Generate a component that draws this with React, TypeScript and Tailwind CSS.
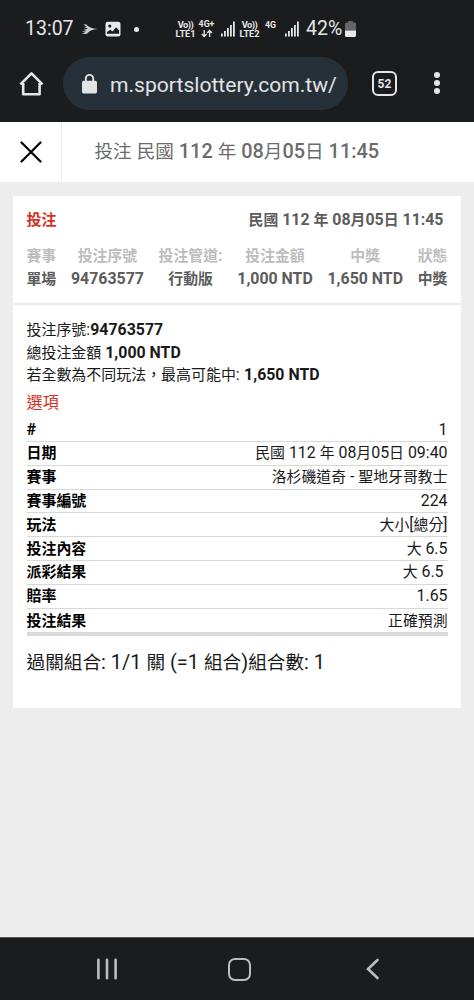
import clsx from "clsx"

const HAN = /([\u3000-\u9fff\uff00-\uffef]+)/

type TextProps = {
  children: string
  className?: string
}

// Han glyphs run slightly smaller than the Latin ones beside them
function Txt({ children, className }: TextProps) {
  return (
    <span className={clsx("whitespace-pre", className)}>
      {children.split(HAN).map((part, i) =>
        HAN.test(part) ? (
          <span key={i} className="text-[0.935em] leading-[0] tracking-normal">
            {part}
          </span>
        ) : (
          part
        ),
      )}
    </span>
  )
}

const summary = [
  { label: "賽事", value: "單場" },
  { label: "投注序號", value: "94763577" },
  { label: "投注管道:", value: "行動版" },
  { label: "投注金額", value: "1,000 NTD" },
  { label: "中獎", value: "1,650 NTD" },
  { label: "狀態", value: "中獎" },
]

const details = [
  { label: "#", value: "1" },
  { label: "日期", value: "民國 112 年 08月05日 09:40" },
  { label: "賽事", value: "洛杉磯道奇 - 聖地牙哥教士" },
  { label: "賽事編號", value: "224" },
  { label: "玩法", value: "大小[總分]" },
  { label: "投注內容", value: "大 6.5" },
  { label: "派彩結果", value: "大 6.5 " },
  { label: "賠率", value: "1.65" },
  { label: "投注結果", value: "正確預測" },
]

function Signal() {
  return (
    <svg className="shrink-0" width="14" height="16" viewBox="0 0 14 16" fill="#e6e6e6">
      <rect x="0" y="12.5" width="1.8" height="3" />
      <rect x="3" y="10" width="1.8" height="5.5" />
      <rect x="6" y="7" width="1.8" height="8.5" />
      <rect x="9" y="4" width="1.8" height="11.5" />
      <rect x="12" y="0.5" width="1.8" height="15" />
    </svg>
  )
}

function Volte({ line }: { line: string }) {
  return (
    <div className="flex w-[21px] flex-col items-center text-[9.3px] font-bold leading-[9px] text-[#e6e6e6]">
      <span className="tracking-[-0.5px]">Vo))</span>
      <span className="tracking-[-0.1px]">{line}</span>
    </div>
  )
}

function StatusBar() {
  return (
    <div className="flex h-[57px] items-center pl-[25px] pt-px text-[#e6e6e6]">
      <span className="w-[49px] text-[19.5px] leading-5">13:07</span>
      <svg className="ml-[7px]" width="17" height="12" viewBox="0 0 17 12">
        <path d="M2.500 1.500L5 1.200Q8 5.200 16.500 6Q8.500 6.800 6 10.800L1 11L5 8.600L0.500 8.700L5.500 7L2 6.900L7 5.700L2.500 3.800L6 4Z" fill="#d0d0d0" />
      </svg>
      <svg className="ml-[7px]" width="16" height="16" viewBox="0 0 16 16">
        <rect x="0.5" y="0.7" width="15" height="14.8" rx="2.3" fill="#e8e8e8" />
        <circle cx="4.8" cy="5" r="1.6" fill="#1b1c1e" />
        <path d="M2 12.8V11l3.2-2.200 2.300 1.600 3.600-4.200 3 3.200v3.400z" fill="#1b1c1e" />
      </svg>
      <span className="ml-[13px] size-[5px] rounded-full bg-[#e6e6e6]" />
      <div className="ml-[36px]">
        <Volte line="LTE1" />
      </div>
      <div className="ml-[2px] flex w-[17px] flex-col items-center text-[8.8px] font-bold leading-[9px]">
        <span>4G+</span>
        <svg width="12" height="9" viewBox="0 0 12 9" fill="none" stroke="#e6e6e6" strokeWidth="1.3">
          <path d="M3.2 1v6.5M.8 5l2.4 2.5L5.6 5M8.6 8V1.5M6.2 4l2.4-2.5L11 4" />
        </svg>
      </div>
      <div className="ml-[6px]">
        <Signal />
      </div>
      <div className="ml-[4px]">
        <Volte line="LTE2" />
      </div>
      <span className="ml-[5px] mb-[8px] w-[14px] text-[8.8px] font-bold leading-[9px]">4G</span>
      <div className="ml-[6px]">
        <Signal />
      </div>
      <span className="ml-[7px] w-[37px] text-[19.5px] leading-5">42%</span>
      <svg className="ml-[2px]" width="11" height="16" viewBox="0 0 11 16">
        <path d="M3.2 0h4.6v1.4H9.5A1.5 1.5 0 0 1 11 2.9V9.5H0V2.9A1.5 1.5 0 0 1 1.5 1.4h1.7z" fill="#666" />
        <path d="M0 9.5h11v4.9a1.5 1.5 0 0 1-1.5 1.5h-8A1.5 1.5 0 0 1 0 14.4z" fill="#e8e8e8" />
      </svg>
    </div>
  )
}

function AddressBar() {
  return (
    <div className="flex h-[65px] items-start text-[#e2e3e4]">
      <svg className="ml-[19px] mt-[14px]" width="25" height="26" viewBox="0 0 25 26" fill="none" stroke="#e6e6e6" strokeWidth="2.6">
        <path d="M4.2 12v11.2h16.4V12M1.4 13.4L12.5 2.4l11 11" strokeLinejoin="round" />
      </svg>
      <div className="ml-[19px] flex h-[53px] w-[285px] items-center rounded-full bg-[#263038] pl-[19px]">
        <svg width="15" height="20" viewBox="0 0 15 20">
          <rect x="0" y="6.8" width="15" height="12.6" rx="1.6" fill="#e2e3e4" />
          <path d="M3.8 8V4.6a3.7 3.7 0 0 1 7.4 0V8" fill="none" stroke="#e2e3e4" strokeWidth="1.9" />
        </svg>
        <span className="ml-[13px] mt-[2px] text-[21.1px] leading-6">m.sportslottery.com.tw/</span>
      </div>
      <div className="ml-[24px] mt-[14px] flex size-[25px] items-center justify-center rounded-[6px] border-[2.5px] border-[#e6e6e6] text-[12px] font-bold leading-none">
        52
      </div>
      <div className="ml-[37px] mt-[15px] flex flex-col gap-[2.5px]">
        <span className="size-[5.5px] rounded-full bg-[#e6e6e6]" />
        <span className="size-[5.5px] rounded-full bg-[#e6e6e6]" />
        <span className="size-[5.5px] rounded-full bg-[#e6e6e6]" />
      </div>
    </div>
  )
}

function TitleBar() {
  return (
    <div className="flex h-[60px] bg-white">
      <div className="flex w-[62px] items-center border-r border-[#ececec] pl-[20px]">
        <svg width="22" height="22" viewBox="0 0 22 22" stroke="#000" strokeWidth="2.2" strokeLinecap="round">
          <path d="M1.5 1.5l19 19M20.5 1.5l-19 19" />
        </svg>
      </div>
      <div className="flex items-center pl-[32.5px] text-[19.9px] leading-6 text-[#6b6b6b]">
        <Txt>投注 民國 </Txt>
        <Txt className="font-medium">112</Txt>
        <Txt> 年 </Txt>
        <Txt className="font-medium">08</Txt>
        <Txt>月</Txt>
        <Txt className="font-medium">05</Txt>
        <Txt>日 </Txt>
        <Txt className="font-medium">11:45</Txt>
      </div>
    </div>
  )
}

function Ticket() {
  return (
    <div className="mx-[13px] mt-[14px] h-[512px] bg-white">
      <div className="h-[109px] border-b-2 border-[#ebebeb] px-[13.5px] pt-[12px] font-bold">
        <div className="flex h-[24px] items-center justify-between pr-[4px] leading-6">
          <Txt className="text-[16px] text-[#d9301f]">投注</Txt>
          <Txt className="text-[15.9px] text-[#5c5c5c]">民國 112 年 08月05日 11:45</Txt>
        </div>
        <div className="mt-[12px] flex justify-between">
          {summary.map((s) => (
            <div key={s.label} className="flex flex-col items-center text-[15.9px] leading-[23px]">
              <Txt className="text-[#bdbdbd]">{s.label}</Txt>
              <Txt className="text-[#5c5c5c]">{s.value}</Txt>
            </div>
          ))}
        </div>
      </div>

      <div className="px-[13.5px] pt-[14px] text-[16px] text-[#1a1a1a]">
        <div className="flex flex-col leading-[22.6px]">
          <div>
            <Txt>投注序號:</Txt>
            <Txt className="text-[15.9px] font-bold">94763577</Txt>
          </div>
          <div>
            <Txt>總投注金額 </Txt>
            <Txt className="text-[15.9px] font-bold">1,000 NTD</Txt>
          </div>
          <div>
            <Txt className="tracking-[0.2px]">若全數為不同玩法，最高可能中: </Txt>
            <Txt className="text-[15.9px] font-bold">1,650 NTD</Txt>
          </div>
        </div>
        <div className="mt-[1px] h-[30.5px] text-[17.3px] leading-7 text-[#d9301f]">
          <Txt>選項</Txt>
        </div>
        <div className="border-b-4 border-[#dadada]">
          {details.map((d) => (
            <div
              key={d.label}
              className="flex h-[23.8px] items-center justify-between border-b border-[#d8d8d8] leading-[22px] last:border-b-0"
            >
              <Txt className="font-bold text-black">{d.label}</Txt>
              <Txt className="text-[15.9px]">{d.value}</Txt>
            </div>
          ))}
        </div>
        <div className="mt-[12px] text-[19.95px] leading-7">
          <Txt>過關組合: 1/1 關 (=1 組合)組合數: 1</Txt>
        </div>
      </div>
    </div>
  )
}

function NavBar() {
  return (
    <div className="flex h-[63px] items-center border-t border-[#55575a] bg-[#1b1c1e]">
      <svg className="ml-[96px]" width="22" height="22" viewBox="0 0 22 22" stroke="#bdbdbd" strokeWidth="2.6" strokeLinecap="round">
        <path d="M2.4 1.8v18.4M11 1.8v18.4M19.6 1.8v18.4" />
      </svg>
      <div className="ml-[110px] size-[23px] rounded-[7px] border-[2.6px] border-[#bdbdbd]" />
      <svg className="ml-[115px]" width="14" height="22" viewBox="0 0 14 22" fill="none" stroke="#bdbdbd" strokeWidth="2.6" strokeLinecap="round">
        <path d="M11.5 2L2 11l9.5 9" />
      </svg>
    </div>
  )
}

export default function App() {
  return (
    <div
      lang="zh-TW"
      className="flex h-[1000px] w-[474px] flex-col overflow-hidden bg-[#ededed] font-[Roboto,'Noto_Sans_CJK_TC',sans-serif]"
    >
      <div className="h-[122px] bg-[#1b1c1e]">
        <StatusBar />
        <AddressBar />
      </div>
      <TitleBar />
      <Ticket />
      <div className="flex-1" />
      <NavBar />
    </div>
  )
}
